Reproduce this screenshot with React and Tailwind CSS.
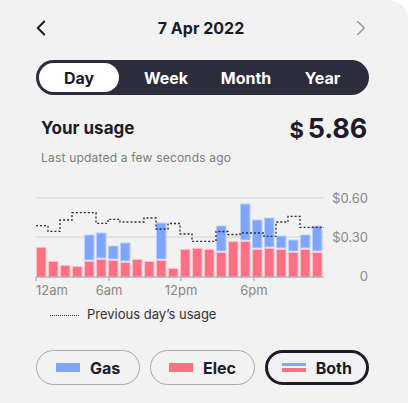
import React from 'react';
import { ChevronLeft, ChevronRight } from 'lucide-react';

const elec = [30, 16, 12, 11, 16, 18, 17, 15, 18, 16, 17, 9, 28, 29, 28, 25, 36, 36, 28, 29, 28, 25, 28, 25];
const gas = [0, 0, 0, 0, 26, 26, 14, 19, 0, 0, 37, 0, 0, 0, 0, 26, 0, 37, 29, 30, 13, 12, 14, 26];

// previous day's usage, [x start, x end, y] in chart coords
const prev = [
  [36, 48, 45.7], [48, 60, 51.3], [60, 72, 40], [72, 96, 32.7], [96, 108, 43.3],
  [108, 120, 39.3], [120, 144, 42], [144, 156, 38], [156, 168, 49], [168, 180, 43.5],
  [180, 192, 54], [192, 216, 61.3], [216, 228, 51.5], [228, 240, 54.5], [240, 264, 53],
  [264, 276, 56.3], [276, 288, 42], [288, 300, 36.3], [300, 324, 47.3],
];

const BASE = 97;

const prevPath = prev
  .map(([x1, x2, y], i) => `${i === 0 ? 'M' : 'L'}${x1} ${y} L${x2} ${y}`)
  .join(' ');

const UsageChart = () => (
  <svg width="408" height="120" viewBox="0 0 408 120" className="block">
    <line x1="36" x2="324" y1="18" y2="18" stroke="#d4d4d4" strokeWidth="1" />
    <line x1="36" x2="324" y1="57" y2="57" stroke="#d4d4d4" strokeWidth="1" />

    {elec.map((e, i) => {
      const x = 36 + i * 12;
      const g = gas[i];
      return (
        <g key={i}>
          <rect x={x + 0.5} y={BASE - e + 0.5} width="9.5" height={e - 0.5} fill="#ff6f84" stroke="#ffc2cb" strokeWidth="1" />
          {g > 0 && (
            <rect x={x + 0.5} y={BASE - e - g} width="9.5" height={g - 1} fill="#7ea6ff" stroke="#b9d0ff" strokeWidth="1" />
          )}
        </g>
      );
    })}

    <path d={prevPath} fill="none" stroke="#2b2b33" strokeWidth="1.3" strokeDasharray="2 2" />

    <line x1="36" x2="324" y1={BASE} y2={BASE} stroke="#a0a0a0" strokeWidth="1" />
    {[36, 109, 181, 254].map((x) => (
      <line key={x} x1={x} x2={x} y1={BASE} y2={BASE + 4} stroke="#a0a0a0" strokeWidth="1" />
    ))}

    <g fill="#888" fontSize="13" fontFamily="Inter, sans-serif">
      <text x="368" y="23" textAnchor="end">$0.60</text>
      <text x="368" y="62" textAnchor="end">$0.30</text>
      <text x="368" y="101" textAnchor="end">0</text>
      <text x="36" y="115">12am</text>
      <text x="109" y="115" textAnchor="middle">6am</text>
      <text x="181" y="115" textAnchor="middle">12pm</text>
      <text x="254" y="115" textAnchor="middle">6pm</text>
    </g>
  </svg>
);

const FilterButton = ({ label, active, children }) => (
  <button
    className={
      active
        ? 'flex h-[35px] items-center justify-center gap-[10px] rounded-full border-[3px] border-[#1c1b29] text-[16px] font-bold text-[#1c1b29]'
        : 'flex h-[35px] items-center justify-center gap-[10px] rounded-full border border-[#a9a9a9] text-[16px] font-bold text-[#1c1b29]'
    }
  >
    {children}
    <span>{label}</span>
  </button>
);

const App = () => {
  const tabs = [
    ['Day', 'w-[80px]'],
    ['Week', 'w-[94px]'],
    ['Month', 'w-[66px]'],
    ['Year', 'w-[87px]'],
  ];

  return (
    <div className="min-h-screen bg-white" style={{ fontFamily: 'Inter, "Noto Sans", sans-serif' }}>
      <div className="h-[403px] w-[408px] overflow-hidden rounded-tr-[20px] bg-[#f2f2f2]">
        {/* date header */}
        <div className="mt-[15px] flex h-[26px] items-center justify-between pl-[28px] pr-[34px]">
          <ChevronLeft className="h-[26px] w-[26px] text-[#1c1b29]" strokeWidth={1.8} />
          <span className="text-[16px] font-bold text-[#1c1b29]">7 Apr 2022</span>
          <ChevronRight className="h-[26px] w-[26px] text-[#9a9a9a]" strokeWidth={1.4} />
        </div>

        {/* period tabs */}
        <div className="ml-[36px] mt-[19px] flex h-[35px] w-[333px] rounded-full bg-[#2d2c3c] p-[3px]">
          {tabs.map(([t, w], i) => (
            <div
              key={t}
              className={
                i === 0
                  ? `${w} flex items-center justify-center rounded-full bg-white text-[16px] font-bold text-[#1c1b29]`
                  : `${w} flex items-center justify-center text-[16px] font-bold text-white`
              }
            >
              {t}
            </div>
          ))}
        </div>

        {/* usage summary */}
        <div className="mt-[20px] flex h-[28px] items-center justify-between pl-[41px] pr-[41px]">
          <span className="text-[17px] font-bold text-[#1c1b29]">Your usage</span>
          <span className="flex items-baseline font-bold text-[#1c1b29]">
            <span className="mr-[4px] text-[22px]">$</span>
            <span className="text-[27px] tracking-[-0.2px]">5.86</span>
          </span>
        </div>
        <div className="ml-[41px] mt-[7px] text-[12px] leading-[16px] tracking-[0.2px] text-[#7c7c7c]">
          Last updated a few seconds ago
        </div>

        {/* chart */}
        <div className="mt-[14px]">
          <UsageChart />
        </div>

        {/* legend */}
        <div className="ml-[50px] mt-[6px] flex h-[18px] items-center gap-[8px]">
          <span className="w-[29px] border-t-[1.5px] border-dotted border-[#2b2b33]" />
          <span className="text-[13px] text-[#333]">Previous day’s usage</span>
        </div>

        {/* fuel filter */}
        <div className="ml-[36px] mt-[26px] grid w-[333px] grid-cols-3 gap-[10px]">
          <FilterButton label="Gas">
            <span className="h-[9px] w-[24px] bg-[#7ea6ff]" />
          </FilterButton>
          <FilterButton label="Elec">
            <span className="h-[9px] w-[24px] bg-[#ff6f84]" />
          </FilterButton>
          <FilterButton label="Both" active>
            <span className="flex w-[24px] flex-col gap-[2px]">
              <span className="h-[3px] w-full bg-[#7ea6ff]" />
              <span className="h-[4px] w-full bg-[#ff6f84]" />
            </span>
          </FilterButton>
        </div>
      </div>
    </div>
  );
};

export default App;
